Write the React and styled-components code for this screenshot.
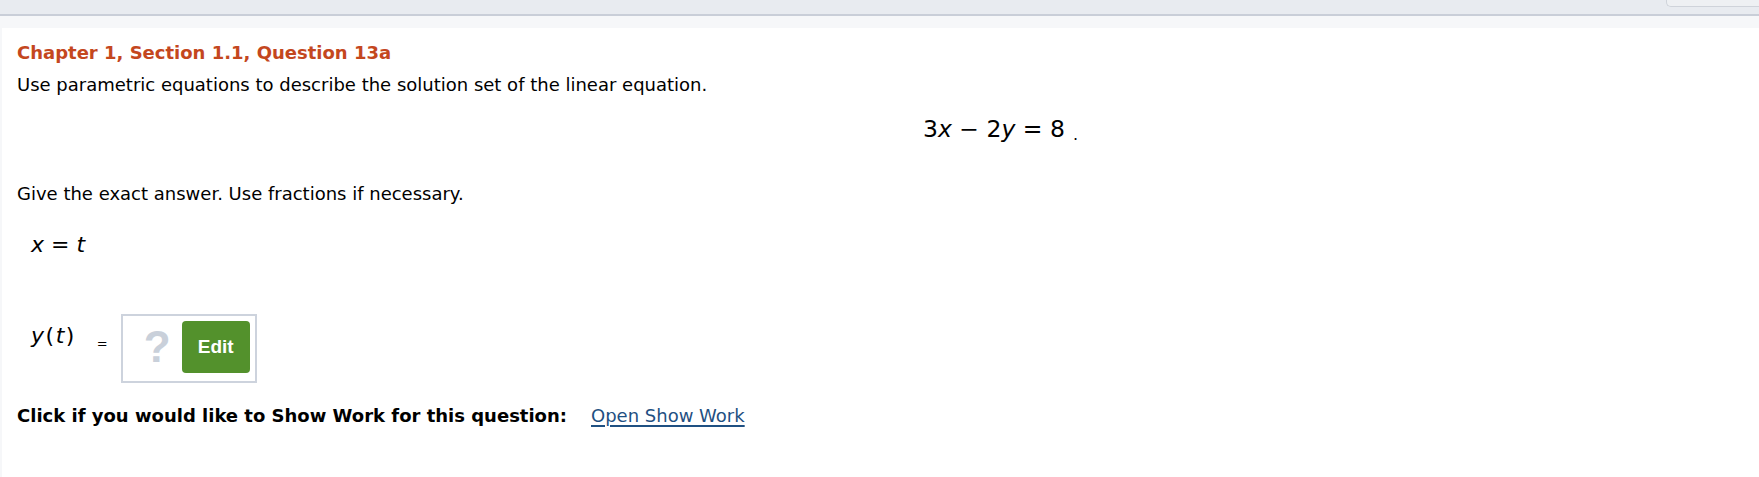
import React from "react";
import styled, { createGlobalStyle } from "styled-components";

const GlobalStyle = createGlobalStyle`
  html, body {
    margin: 0;
    padding: 0;
    background: #f6f7f9;
  }
  body {
    font-family: "DejaVu Sans", Verdana, sans-serif;
    color: #000;
  }
`;

const Page = styled.div`
  width: 1759px;
  height: 477px;
  overflow: hidden;
  background: #f6f7f9;
  display: flex;
  flex-direction: column;
`;

const TopBar = styled.div`
  height: 14px;
  flex-shrink: 0;
  background: #e8ebf0;
  border-bottom: 2px solid #c9ced8;
  display: flex;
  justify-content: flex-end;
`;

const TabEdge = styled.div`
  width: 92px;
  height: 6px;
  background: #eef0f3;
  border: 1px solid #cfd3da;
  border-top: none;
  border-right: none;
  border-bottom-left-radius: 5px;
`;

const Strip = styled.div`
  height: 12px;
  flex-shrink: 0;
`;

const Content = styled.main`
  flex: 1;
  margin-left: 2px;
  background: #fff;
  padding: 15px 0 0 15px;
`;

const Title = styled.h2`
  margin: 0;
  font-size: 18px;
  line-height: 20px;
  font-weight: bold;
  color: #c4471e;
`;

const Text = styled.p`
  margin: ${(p) => p.$top || 0}px 0 0;
  font-size: 18px;
  line-height: 20px;
`;

const Display = styled.div`
  margin-top: 19px;
  padding-left: 906px;
  font-size: 23.5px;
  line-height: 30px;
  white-space: nowrap;
`;

const Var = styled.i`
  font-style: italic;
`;

const Dot = styled.span`
  font-size: 16px;
  margin-left: 8px;
  position: relative;
  top: 3px;
`;

const MathRow = styled.div`
  margin-top: 26px;
  padding-left: 14px;
  font-size: 22px;
  line-height: 30px;
`;

const AnswerRow = styled.div`
  margin-top: 54px;
  padding-left: 14px;
  display: flex;
  align-items: flex-start;
`;

const Label = styled.span`
  margin-top: 7px;
  font-size: 22px;
  line-height: 30px;
  letter-spacing: 1.5px;
`;

const Equals = styled.span`
  margin: 22px 13px 0 21px;
  font-size: 13px;
  line-height: 16px;
`;

const AnswerBox = styled.div`
  width: 132px;
  height: 65px;
  border: 2px solid #cdd3dd;
  display: flex;
  align-items: flex-start;
`;

const Placeholder = styled.span`
  margin: 8px 0 0 21px;
  font-family: "Liberation Sans", Arial, sans-serif;
  font-weight: bold;
  font-size: 44px;
  line-height: 46px;
  color: #c9d0da;
`;

const EditButton = styled.button`
  margin: 5px 5px 0 auto;
  width: 68px;
  height: 52px;
  border: none;
  border-radius: 4px;
  background: #53912c;
  color: #fff;
  font-family: "Liberation Sans", Arial, sans-serif;
  font-weight: bold;
  font-size: 19px;
  padding: 0;
`;

const WorkRow = styled.div`
  margin-top: 23px;
  display: flex;
  align-items: baseline;
  gap: 24px;
  line-height: 20px;
`;

const WorkLabel = styled.strong`
  font-size: 18px;
  font-weight: bold;
`;

const WorkLink = styled.a`
  font-size: 18px;
  color: #1f5082;
  text-decoration: underline;
  text-decoration-thickness: 2px;
  text-underline-offset: 3px;
  cursor: pointer;
`;

export default function App() {
  return (
    <>
      <GlobalStyle />
      <Page>
        <TopBar>
          <TabEdge />
        </TopBar>
        <Strip />
        <Content>
          <Title>Chapter 1, Section 1.1, Question 13a</Title>
          <Text $top={12}>
            Use parametric equations to describe the solution set of the linear equation.
          </Text>
          <Display>
            3<Var>x</Var> − 2<Var>y</Var> = 8<Dot>.</Dot>
          </Display>
          <Text $top={37}>Give the exact answer. Use fractions if necessary.</Text>
          <MathRow>
            <Var>x</Var> = <Var>t</Var>
          </MathRow>
          <AnswerRow>
            <Label>
              <Var>y</Var>(<Var>t</Var>)
            </Label>
            <Equals>=</Equals>
            <AnswerBox>
              <Placeholder>?</Placeholder>
              <EditButton>Edit</EditButton>
            </AnswerBox>
          </AnswerRow>
          <WorkRow>
            <WorkLabel>Click if you would like to Show Work for this question:</WorkLabel>
            <WorkLink>Open Show Work</WorkLink>
          </WorkRow>
        </Content>
      </Page>
    </>
  );
}
